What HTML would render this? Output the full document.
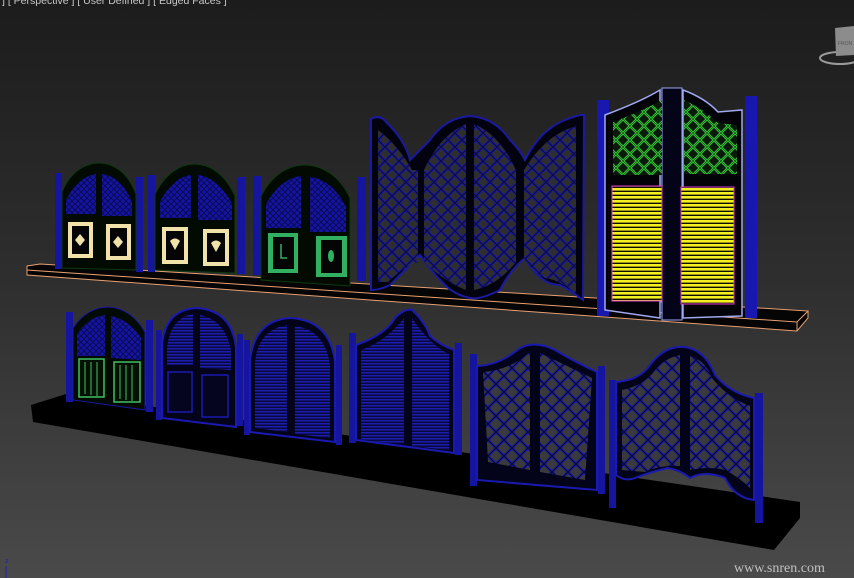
<!DOCTYPE html>
<html><head><meta charset="utf-8"><style>
html,body{margin:0;padding:0;width:854px;height:578px;overflow:hidden;background:#333}
svg{display:block}
</style></head><body>
<svg width="854" height="578" viewBox="0 0 854 578" xmlns="http://www.w3.org/2000/svg">
<defs>
<linearGradient id="bg" x1="0" y1="0" x2="0" y2="1">
<stop offset="0" stop-color="#1c1c1c"/><stop offset="0.5" stop-color="#2f2f2f"/><stop offset="1" stop-color="#4a4a4a"/>
</linearGradient>
<pattern id="latS" width="6" height="6" patternUnits="userSpaceOnUse">
<rect width="6" height="6" fill="#1414a8"/><path d="M0 3L3 0L6 3L3 6Z" fill="none" stroke="#0a0a50" stroke-width="1"/>
</pattern>
<pattern id="latB" width="14" height="14" patternUnits="userSpaceOnUse">
<rect width="14" height="14" fill="#2e2e2e"/><path d="M0 0L14 14M14 0L0 14" stroke="#1a1a9a" stroke-width="3"/><path d="M0 0L14 14M14 0L0 14" stroke="#0a0a30" stroke-width="1"/>
</pattern>
<pattern id="latB2" width="16" height="16" patternUnits="userSpaceOnUse">
<rect width="16" height="16" fill="#3a3a3a"/><path d="M0 0L16 16M16 0L0 16" stroke="#1a1aa8" stroke-width="3"/><path d="M0 0L16 16M16 0L0 16" stroke="#05051a" stroke-width="1"/>
</pattern>
<pattern id="latG" width="14" height="14" patternUnits="userSpaceOnUse">
<rect width="14" height="14" fill="#0a1a0a"/><path d="M0 0L14 14M14 0L0 14" stroke="#40d040" stroke-width="2.5"/><path d="M0 0L14 14M14 0L0 14" stroke="#106010" stroke-width="0.8"/>
</pattern>
<pattern id="lou" width="4" height="3" patternUnits="userSpaceOnUse">
<rect width="4" height="3" fill="#0a0a3a"/><rect width="4" height="1.5" fill="#1c1cb0"/>
</pattern>
<pattern id="yel" width="4" height="4" patternUnits="userSpaceOnUse">
<rect width="4" height="4" fill="#101000"/><rect width="4" height="2.6" fill="#f2f020"/>
</pattern>
</defs>
<rect width="854" height="578" fill="url(#bg)"/>

<text x="2" y="4" font-family="Liberation Sans, sans-serif" font-size="10.5" fill="#c8c8c8">] [ Perspective ] [ User Defined ] [ Edged Faces ]</text>

<ellipse cx="840" cy="58" rx="20" ry="6" fill="none" stroke="#9a9a9a" stroke-width="2"/>
<path d="M835 28L854 26L854 55L836 56Z" fill="#8c8c8c"/>
<text x="838" y="45" font-family="Liberation Sans, sans-serif" font-size="5" fill="#555">FRON</text>

<path d="M27 266L40 264L808 311L808 318L797 331L27 275Z" fill="#050505"/>
<path d="M27 266L40 264L808 311L797 322L27 270Z" fill="none" stroke="#e8a070" stroke-width="1"/>
<path d="M797 322L797 331M27 270L27 275L797 331L808 318L808 311" fill="none" stroke="#e8a070" stroke-width="1"/>

<path d="M31 405L66 394L800 502L800 518L774 550L33 422Z" fill="#000"/>

<!-- door A -->
<g>
<rect x="55" y="173" width="7" height="96" fill="#1515a0"/>
<rect x="136" y="177" width="7" height="95" fill="#1515a0"/>
<path d="M62 192C70 172 85 163 99 163C113 163 128 172 136 194L136 270L62 268Z" fill="#020a02" stroke="#0c3a10" stroke-width="1"/>
<path d="M66 200C74 184 86 175 96 174L96 214L66 214Z" fill="url(#latS)"/>
<path d="M102 174C113 175 125 185 132 202L132 216L102 216Z" fill="url(#latS)"/>
<rect x="68" y="222" width="25" height="36" fill="#f0e2a8"/><rect x="72" y="226" width="17" height="28" fill="#050505"/><path d="M80 234L85 240L80 246L75 240Z" fill="#f0e2a8"/>
<rect x="106" y="224" width="25" height="36" fill="#f0e2a8"/><rect x="110" y="228" width="17" height="28" fill="#050505"/><path d="M118 236L123 242L118 248L113 242Z" fill="#f0e2a8"/>
</g>
<!-- door B -->
<g>
<rect x="148" y="175" width="7" height="97" fill="#1515a0"/>
<rect x="237" y="177" width="8" height="97" fill="#1515a0"/>
<path d="M155 194C165 174 180 164 194 164C210 164 225 174 235 196L235 273L155 270Z" fill="#020a02" stroke="#0c3a10" stroke-width="1"/>
<path d="M160 202C168 186 180 176 191 175L191 218L160 218Z" fill="url(#latS)"/>
<path d="M198 175C210 176 224 187 232 204L232 220L198 220Z" fill="url(#latS)"/>
<rect x="162" y="227" width="26" height="37" fill="#f0e2a8"/><rect x="166" y="231" width="18" height="29" fill="#050505"/><path d="M170 241Q175 236 180 241L175 250Z" fill="#f0e2a8"/>
<rect x="203" y="229" width="26" height="37" fill="#f0e2a8"/><rect x="207" y="233" width="18" height="29" fill="#050505"/><path d="M211 243Q216 238 221 243L216 252Z" fill="#f0e2a8"/>
</g>
<!-- door C -->
<g>
<rect x="253" y="176" width="8" height="99" fill="#1515a0"/>
<rect x="357" y="177" width="9" height="104" fill="#1515a0"/>
<path d="M261 196C272 175 288 165 305 165C322 165 340 176 350 198L350 286L261 280Z" fill="#020a02" stroke="#0c3a10" stroke-width="1"/>
<path d="M266 204C275 188 288 177 301 176L301 228L266 228Z" fill="url(#latS)"/>
<path d="M310 177C324 178 338 190 346 207L346 232L310 232Z" fill="url(#latS)"/>
<rect x="268" y="233" width="30" height="40" fill="#30b060"/><rect x="273" y="237" width="21" height="32" fill="#050505"/><path d="M281 244L281 258L287 258" fill="none" stroke="#30b060" stroke-width="1.5"/>
<rect x="316" y="236" width="31" height="41" fill="#30b060"/><rect x="321" y="240" width="21" height="33" fill="#050505"/><ellipse cx="331" cy="256" rx="3" ry="6" fill="#30b060"/>
</g>
<!-- lattice screen D -->
<g>
<path d="M371 119Q380 114 386 122Q405 140 410 160Q425 145 430 140Q445 118 470 116Q495 118 510 140Q520 150 525 160Q540 130 565 120Q580 114 584 115L583 300Q570 290 560 285Q540 285 525 258Q510 270 500 290Q480 300 470 298Q455 295 445 285Q430 270 420 255Q400 275 390 285Q380 290 371 290Z" fill="#030310" stroke="#1a1aa0" stroke-width="2"/>
<path d="M378 130Q398 145 412 170L418 170L418 262Q400 270 388 282L378 282Z" fill="url(#latB)"/>
<path d="M424 170Q440 135 466 124L466 290Q445 282 424 262Z" fill="url(#latB)"/>
<path d="M474 124Q500 135 516 170L516 262Q498 285 474 290Z" fill="url(#latB)"/>
<path d="M524 170Q545 135 576 126L576 294Q560 280 545 278Q535 275 524 258Z" fill="url(#latB)"/>
</g>
<!-- door E -->
<g>
<rect x="597" y="100" width="12" height="216" fill="#1818b0"/>
<rect x="745" y="96" width="12" height="222" fill="#1818b0"/>
<path d="M605 115Q640 102 660 90L660 318L605 310Z" fill="#020208" stroke="#a0a8f0" stroke-width="1.5"/>
<path d="M683 90Q705 98 718 112L742 110L742 316L683 318Z" fill="#020208" stroke="#a0a8f0" stroke-width="1.5"/>
<rect x="662" y="88" width="20" height="232" fill="#040418" stroke="#a0a8f0" stroke-width="1"/>
<path d="M613 122Q640 112 662 100L662 175L613 175Z" fill="url(#latG)"/>
<path d="M684 100Q705 110 718 123L737 125L737 174L684 174Z" fill="url(#latG)"/>
<rect x="612" y="186" width="50" height="115" fill="url(#yel)" stroke="#e040d0" stroke-width="1"/>
<rect x="681" y="187" width="53" height="117" fill="url(#yel)" stroke="#e040d0" stroke-width="1"/>
</g>

<!-- BOTTOM ROW -->
<g>
<rect x="66" y="312" width="7" height="90" fill="#1515a0"/>
<rect x="146" y="320" width="7" height="92" fill="#1515a0"/>
<path d="M73 328C82 314 95 307 108 307C122 307 136 316 145 332L145 410L73 400Z" fill="#020a02" stroke="#1a1aa0" stroke-width="1"/>
<path d="M77 334C85 322 95 316 105 315L105 356L77 356Z" fill="url(#latS)"/>
<path d="M111 316C122 318 134 326 141 338L141 360L111 358Z" fill="url(#latS)"/>
<rect x="79" y="359" width="25" height="38" fill="#041004" stroke="#40c060" stroke-width="1.5"/>
<path d="M85 362V394M91 362V395M97 362V396" stroke="#40c060" stroke-width="1"/>
<rect x="114" y="362" width="26" height="40" fill="#041004" stroke="#40c060" stroke-width="1.5"/>
<path d="M120 365V399M126 365V400M132 365V401" stroke="#40c060" stroke-width="1"/>
</g>
<g>
<rect x="156" y="330" width="6" height="90" fill="#1515a0"/>
<rect x="237" y="334" width="6" height="92" fill="#1515a0"/>
<path d="M162 345Q165 310 196 308Q232 310 236 348L236 427L162 418Z" fill="#03031a" stroke="#1a1ab0" stroke-width="2"/>
<path d="M167 348Q170 318 193 314L193 365L167 365Z" fill="url(#lou)"/>
<path d="M200 315Q225 320 231 350L231 370L200 368Z" fill="url(#lou)"/>
<rect x="168" y="372" width="24" height="40" fill="#050520" stroke="#1a1ab0" stroke-width="1.5"/>
<rect x="202" y="375" width="26" height="42" fill="#050520" stroke="#1a1ab0" stroke-width="1.5"/>
</g>
<g>
<rect x="244" y="340" width="6" height="95" fill="#1515a0"/>
<rect x="336" y="345" width="6" height="100" fill="#1515a0"/>
<path d="M250 360Q255 320 290 318Q330 320 335 362L335 442L250 432Z" fill="#03031a" stroke="#1a1ab0" stroke-width="2"/>
<path d="M255 362Q258 330 287 325L287 432L255 428Z" fill="url(#lou)"/>
<path d="M295 326Q325 330 330 365L330 438L295 434Z" fill="url(#lou)"/>
</g>
<g>
<rect x="349" y="333" width="7" height="110" fill="#1515a0"/>
<rect x="455" y="343" width="7" height="112" fill="#1515a0"/>
<path d="M356 345Q385 335 395 318Q405 308 412 310Q425 322 430 336Q440 345 454 350L454 453L356 440Z" fill="#03031a" stroke="#1a1ab0" stroke-width="2"/>
<path d="M361 350Q385 342 404 318L404 444L361 440Z" fill="url(#lou)"/>
<path d="M412 318Q430 345 449 354L449 450L412 446Z" fill="url(#lou)"/>
</g>
<g>
<rect x="470" y="354" width="7" height="132" fill="#1515a0"/>
<rect x="598" y="366" width="7" height="128" fill="#1515a0"/>
<path d="M477 366Q500 365 520 348Q535 340 555 350Q575 362 597 372L597 490L477 480Z" fill="#03031a" stroke="#1a1ab0" stroke-width="2"/>
<path d="M483 372Q510 370 530 352L530 470L488 462Z" fill="url(#latB2)"/>
<path d="M540 353Q565 365 592 378L585 480L540 472Z" fill="url(#latB2)"/>
</g>
<g>
<rect x="609" y="380" width="7" height="128" fill="#1515a0"/>
<rect x="755" y="393" width="8" height="130" fill="#1515a0"/>
<path d="M616 382Q640 380 650 365Q665 345 685 347Q705 350 715 375Q730 393 754 398L754 500Q735 498 725 478Q705 470 690 478Q680 470 668 468Q650 472 635 478Q625 482 616 475Z" fill="#03031a" stroke="#1a1ab0" stroke-width="2"/>
<path d="M622 390Q645 385 655 370Q665 358 680 355L680 466Q660 465 645 472L622 470Z" fill="url(#latB2)"/>
<path d="M690 356Q705 360 712 378Q728 398 750 406L750 488Q740 478 725 470Q710 466 690 470Z" fill="url(#latB2)"/>
</g>

<line x1="6" y1="566" x2="6" y2="578" stroke="#2020c0" stroke-width="1"/>
<text x="5" y="563" font-family="Liberation Sans, sans-serif" font-size="7" fill="#2020c0">z</text>

<text x="734" y="572" font-family="Liberation Serif, serif" font-size="14" fill="#d8d8d8" opacity="0.85">www.snren.com</text>
</svg>
</body></html>
